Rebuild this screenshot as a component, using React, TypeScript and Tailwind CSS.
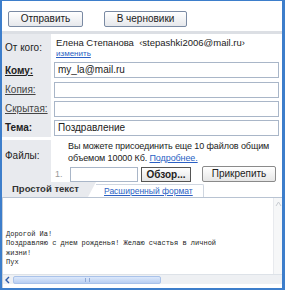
const App = () => {
  const field = "h-[16px] border border-[#a9b6c8] bg-white px-[3px] text-[10px] leading-[14px] text-[#222]";
  return (
    <div className="w-[285px] h-[290px] bg-[#3d7ecb] p-[2px] pr-[3px] pt-[1px] overflow-hidden font-['Liberation_Sans',Arial,sans-serif]">
      <div className="h-full bg-white flex flex-col">
        {/* Buttons */}
        <div className="h-[30px] flex items-start gap-[21px] pl-[6px] pt-[10px]">
          <button className="w-[75px] h-[16px] border border-[#7a8aa3] rounded-[2px] bg-gradient-to-b from-white to-[#e6e8ec] text-[10px] leading-[14px] text-[#222]">
            Отправить
          </button>
          <button className="w-[83px] h-[16px] border border-[#7a8aa3] rounded-[2px] bg-gradient-to-b from-white to-[#e6e8ec] text-[10px] leading-[14px] text-[#222]">
            В черновики
          </button>
        </div>
        <div className="h-[3px] bg-[#dcdfe4]" />

        {/* Form */}
        <div className="grid grid-cols-[49px_1fr] text-[10px] text-[#222]">
          <div className="h-[26px] bg-[#e8eaee] flex items-center pl-[3px]">От кого:</div>
          <div className="h-[26px] pl-[5px] pt-[3px] leading-[11px] whitespace-nowrap">
            <div className="text-[9.5px]">Елена Степанова&nbsp; ‹stepashki2006@mail.ru›</div>
            <div className="text-[8px] text-[#2a5fc4] underline">изменить</div>
          </div>

          <div className="h-[20px] bg-[#e8eaee] flex items-center pl-[3px] font-bold underline">Кому:</div>
          <div className="h-[20px] flex items-center pl-[3px] pr-[3px]">
            <div className={`${field} w-full`}>my_la@mail.ru</div>
          </div>

          <div className="h-[19px] bg-[#e8eaee] flex items-center pl-[3px] underline text-[#444]">Копия:</div>
          <div className="h-[19px] flex items-center pl-[3px] pr-[3px]">
            <div className={`${field} w-full`} />
          </div>

          <div className="h-[19px] bg-[#e8eaee] flex items-center pl-[3px] underline text-[#444]">Скрытая:</div>
          <div className="h-[19px] flex items-center pl-[3px] pr-[3px]">
            <div className={`${field} w-full`} />
          </div>

          <div className="h-[19px] bg-[#e8eaee] flex items-center pl-[3px] font-bold">Тема:</div>
          <div className="h-[19px] flex items-center pl-[3px] pr-[3px]">
            <div className={`${field} w-full`}>Поздравление</div>
          </div>

          <div className="h-[3px] bg-white col-span-2" />

          <div className="h-[42px] bg-[#e8eaee] pl-[3px] pt-[8px]">Файлы:</div>
          <div className="h-[42px] pl-[17px] leading-[12px] text-[9px] whitespace-nowrap tracking-[-0.1px]">
            <div>Вы можете присоединить еще 10 файлов общим</div>
            <div>
              объемом 10000 Кб. <span className="text-[#2a5fc4] underline">Подробнее.</span>
            </div>
            <div className="flex items-center mt-[2px] -ml-[13px] gap-[3px] tracking-normal">
              <span className="text-[#999] w-[12px]">1.</span>
              <div className="w-[68px] h-[15px] border border-[#a9b6c8] bg-white" />
              <button className="w-[50px] h-[15px] border border-[#555] bg-gradient-to-b from-white to-[#e4e4e4] text-[10px] font-bold leading-[13px]">
                Обзор...
              </button>
              <button className="ml-[8px] w-[74px] h-[16px] border border-[#8a8a8a] rounded-[2px] bg-gradient-to-b from-white to-[#e6e6e6] text-[10px] leading-[14px]">
                Прикрепить
              </button>
            </div>
          </div>
        </div>

        {/* Tabs */}
        <div className="h-[15px] flex items-end text-[9.5px] bg-white">
          <div className="h-[15px] w-[86px] bg-[#e8eaee] flex items-center pl-[10px] font-bold text-[#333]">
            Простой текст
          </div>
          <div className="h-[15px] w-0 border-l-[8px] border-l-[#e8eaee] border-b-[15px] border-b-white" />
          <div className="h-[13px] pl-[8px] pr-[10px] flex items-center text-[#2a5fc4] underline text-[8.5px] border-t border-r border-[#cfd6e0] rounded-tr-[2px]">
            Расширенный формат
          </div>
        </div>

        {/* Textarea */}
        <div className="flex-1 flex flex-col border-t border-[#b8c3d2] border-l border-l-[#c8cfd8] bg-white">
          <div className="flex-1 flex">
            <div className="flex-1 pl-[3px] pt-[32px] font-['Liberation_Mono','Courier_New',monospace] text-[7px] leading-[9.3px] text-[#222] whitespace-pre">
              {"Дорогой Иа!\nПоздравляю с днем рожденья! Желаю счастья в личной\nжизни!\nПух"}
            </div>
            <div className="w-[9px] bg-[#f6f7f8] border-l border-[#e8eaee] flex justify-center pt-[3px]">
              <svg width="7" height="6" viewBox="0 0 7 6">
                <path d="M1 5 L3.5 1 L6 5" fill="none" stroke="#c8ccd2" strokeWidth="1" />
              </svg>
            </div>
          </div>
          <div className="h-[10px] flex items-center bg-[#eef0f3] border-t border-[#dde2e8]">
            <svg width="8" height="8" viewBox="0 0 8 8" className="ml-[1px]">
              <path d="M5 1 L2 4 L5 7" fill="none" stroke="#2d5aa8" strokeWidth="1.4" />
            </svg>
            <div className="ml-[1px] w-[148px] h-[8px] rounded-[2px] bg-gradient-to-b from-[#dce8fb] to-[#b9cff2] border border-[#a9c2ea] flex items-center justify-center">
              <div className="w-[5px] h-[4px] border-x border-[#8fa9d8]" />
            </div>
          </div>
          <div className="h-[4px] bg-white" />
        </div>
      </div>
    </div>
  );
};

export default App;
